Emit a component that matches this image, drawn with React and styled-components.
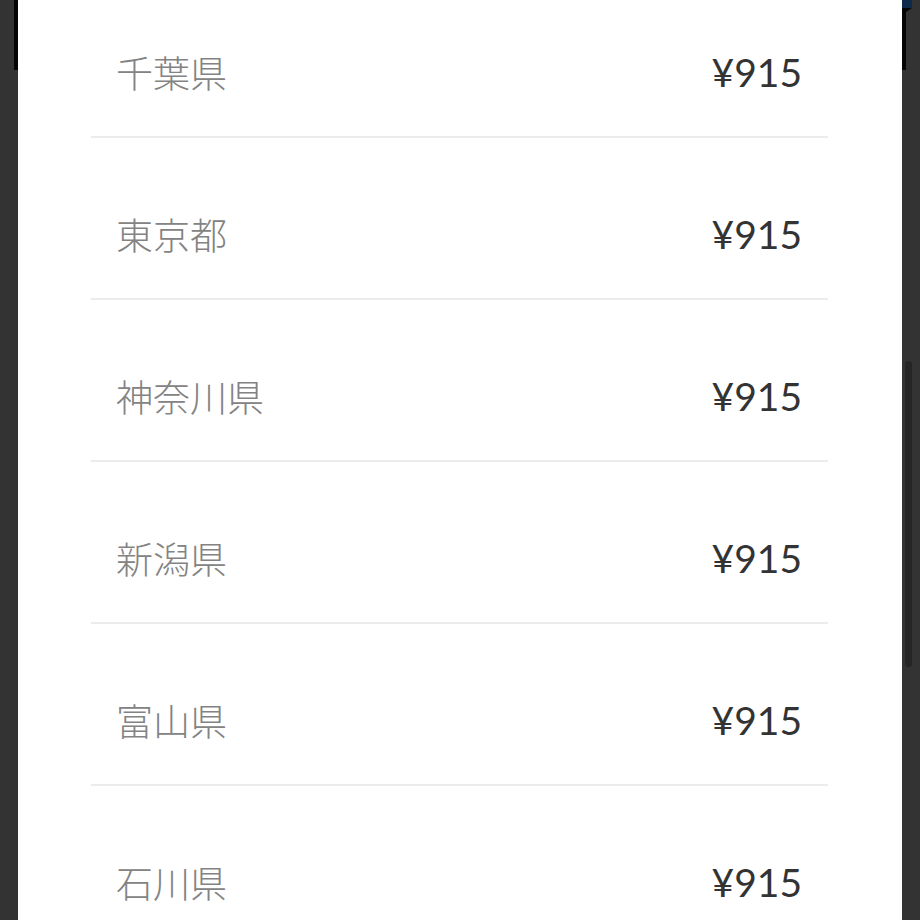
import React from "react";
import styled, { createGlobalStyle } from "styled-components";

const Global = createGlobalStyle`
  html, body { margin: 0; padding: 0; background: #333333; }
  body { overflow: hidden; }
  #root { height: 920px; }
`;

const Page = styled.div`
  display: grid;
  grid-template-columns: 18px 1fr 18px;
  height: 920px;
  overflow: hidden;
  background: #333333;
`;

const LeftGutter = styled.div`
  display: flex;
  justify-content: flex-end;
  align-items: flex-start;
`;

const EdgeStrip = styled.div`
  width: 4px;
  height: 70px;
  background: #050505;
`;

const RightGutter = styled.div`
  display: flex;
  flex-direction: column;
  align-items: flex-start;
`;

const RightTop = styled.div`
  width: 10px;
  height: 70px;
  background: linear-gradient(to bottom, #0d2a4a 0px, #0d2a4a 8px, #050505 8px);
  clip-path: polygon(0 0, 100% 0, 100% 8px, 4px 12px, 4px 100%, 0 100%);
`;

const Thumb = styled.div`
  margin-top: 291px;
  margin-left: 3px;
  width: 7px;
  height: 306px;
  border-radius: 4px;
  background: #252525;
`;

const Panel = styled.div`
  background: #ffffff;
  padding: 0 74px 0 73px;
  overflow: hidden;
`;

const List = styled.div`
  margin-top: -24px;
  display: flex;
  flex-direction: column;
`;

const Row = styled.div`
  display: flex;
  justify-content: space-between;
  align-items: center;
  height: 160px;
  box-sizing: content-box;
  padding: 0 26px 0 25px;
  border-bottom: 2px solid #ececec;
  & > * { margin-top: 32px; }
`;

const Name = styled.span`
  font-family: "Noto Sans CJK JP", "Noto Sans", sans-serif;
  font-size: 37px;
  font-weight: 300;
  line-height: 40px;
  color: #838383;
`;

const Price = styled.span`
  font-family: Lato, "Noto Sans", sans-serif;
  font-size: 39px;
  line-height: 40px;
  color: #333333;
`;

const prefectures = ["千葉県", "東京都", "神奈川県", "新潟県", "富山県", "石川県"];

export default function App() {
  return (
    <>
      <Global />
      <Page>
        <LeftGutter>
          <EdgeStrip />
        </LeftGutter>
        <Panel>
          <List>
            {prefectures.map((p) => (
              <Row key={p}>
                <Name>{p}</Name>
                <Price>¥915</Price>
              </Row>
            ))}
          </List>
        </Panel>
        <RightGutter>
          <RightTop />
          <Thumb />
        </RightGutter>
      </Page>
    </>
  );
}
